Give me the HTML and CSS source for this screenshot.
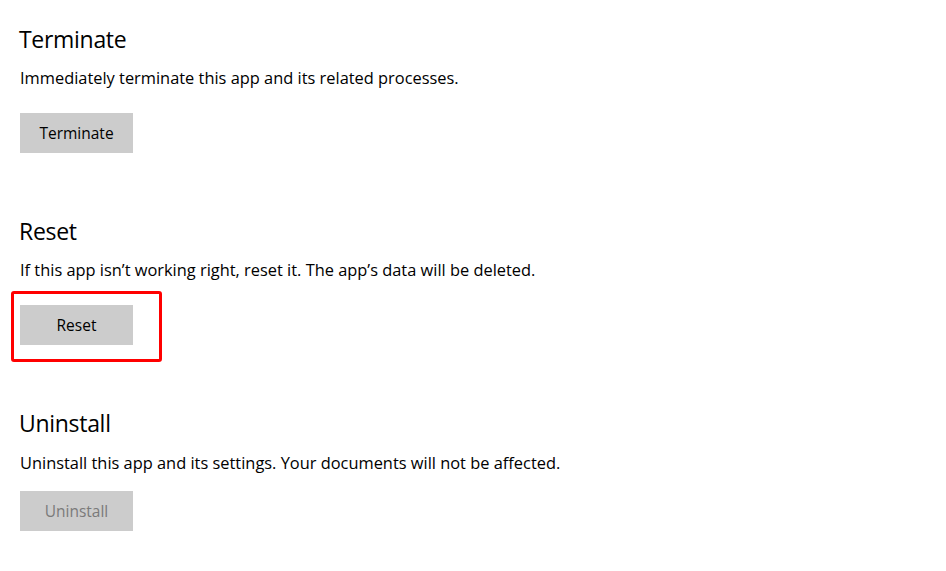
FILE: index.html
```html
<!DOCTYPE html>
<html lang="en">
<head>
  <meta charset="UTF-8">
  <meta name="viewport" content="width=device-width, initial-scale=1.0">
  <title>App settings</title>
  <link rel="stylesheet" href="styles.css">
</head>
<body>
  <!-- Terminate -->
  <section class="group">
    <h2 class="group-title">Terminate</h2>
    <p class="group-desc">Immediately terminate this app and its related processes.</p>
    <button class="action">Terminate</button>
  </section>

  <!-- Reset -->
  <section class="group">
    <h2 class="group-title">Reset</h2>
    <p class="group-desc">If this app isn’t working right, reset it. The app’s data will be deleted.</p>
    <div class="highlight">
      <button class="action">Reset</button>
    </div>
  </section>

  <!-- Uninstall -->
  <section class="group group-last">
    <h2 class="group-title">Uninstall</h2>
    <p class="group-desc">Uninstall this app and its settings. Your documents will not be affected.</p>
    <button class="action" disabled>Uninstall</button>
  </section>
</body>
</html>
```

FILE: styles.css
```css
body {
  margin: 0;
  padding: 23px 0 0 20px;
  background-color: #ffffff;
  color: #000000;
  font-family: "Open Sans", "Noto Sans", sans-serif;
}
.group {
  height: 192px;
}
.group-title {
  margin: 0 0 0 -1px;
  font-size: 23px;
  font-weight: 400;
  line-height: 32px;
  letter-spacing: -0.3px;
}
.group-desc {
  margin: 11px 0 0;
  font-size: 16.4px;
  line-height: 24px;
}
.action {
  display: block;
  width: 113px;
  height: 40px;
  margin-top: 23px;
  padding: 0;
  border: none;
  background-color: #cccccc;
  color: #000000;
  font-family: inherit;
  font-size: 15.5px;
}
.action:disabled {
  color: #7a7a7a;
}
.group-last .group-desc {
  margin-top: 12px;
}
.group-last .action {
  margin-top: 16px;
}
.highlight {
  position: relative;
  width: 113px;
}
.highlight::after {
  content: "";
  position: absolute;
  left: -9px;
  top: -14px;
  width: 145px;
  height: 65px;
  border: 3px solid #ff0000;
  border-radius: 3px;
}
```
